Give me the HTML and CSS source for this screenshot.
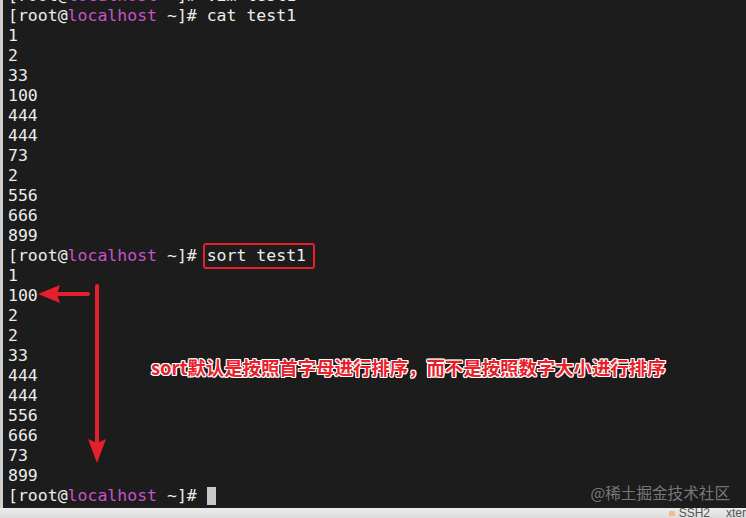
FILE: index.html
```html
<!DOCTYPE html>
<html lang="zh-CN">
<head>
    <meta charset="UTF-8">
    <title>sort test1</title>
    <link rel="stylesheet" href="styles.css">
</head>
<body>
    <div class="terminal">
        <div class="screen">
<pre class="output"><span class="line">[root@<span class="host">localhost</span> ~]# vim test1</span>
<span class="line">[root@<span class="host">localhost</span> ~]# cat test1</span>
1
2
33
100
444
444
73
2
556
666
899
<span class="line">[root@<span class="host">localhost</span> ~]# <span class="boxed">sort test1</span></span>
1
100
2
2
33
444
444
556
666
73
899
<span class="line">[root@<span class="host">localhost</span> ~]# <span class="cursor"></span></span></pre>
        </div>

        <!-- annotations drawn over the screenshot -->
        <svg class="arrows" width="746" height="508" viewBox="0 0 746 508">
            <path d="M88 294 L57 294" stroke="#e3202c" stroke-width="4" stroke-linecap="round"/>
            <path d="M38 294 L60 285 L57 294 L60 303 Z" fill="#e3202c"/>
            <path d="M97 286 L97 442" stroke="#e3202c" stroke-width="4" stroke-linecap="round"/>
            <path d="M97 463 L88 439 L97 443 L106 439 Z" fill="#e3202c"/>
        </svg>
        <div class="note">sort默认是按照首字母进行排序，而不是按照数字大小进行排序</div>
        <div class="watermark">@稀土掘金技术社区</div>
    </div>
    <div class="statusbar">
        <span class="dot"></span>
        <span>SSH2</span>
        <span>xterm</span>
    </div>
</body>
</html>
```

FILE: styles.css
```css
html, body {
    margin: 0;
    padding: 0;
}
body {
    width: 746px;
    height: 518px;
    overflow: hidden;
    background: #1c1c1c;
}
.terminal {
    position: relative;
    height: 508px;
    background: #1c1c1c;
    border-left: 3px solid #cfcfcf;
    box-sizing: border-box;
    overflow: hidden;
}
.screen {
    height: 508px;
    display: flex;
    flex-direction: column;
    justify-content: flex-end;
    padding: 0 0 2px 5px;
    box-sizing: border-box;
}
.output {
    margin: 0;
    font-family: "DejaVu Sans Mono", "Liberation Mono", monospace;
    font-size: 16.5px;
    line-height: 20px;
    color: #ececec;
    white-space: pre;
}
.host {
    color: #cc4fcc;
}
.boxed {
    position: relative;
}
.boxed::after {
    content: "";
    position: absolute;
    top: -3px;
    bottom: -4px;
    left: -4px;
    right: -9px;
    border: 2px solid #e3202c;
    border-radius: 3px;
}
.cursor {
    display: inline-block;
    width: 9px;
    height: 18px;
    background: #c8c8cc;
    vertical-align: -4px;
}
.arrows {
    position: absolute;
    left: -3px;
    top: 0;
}
.note {
    position: absolute;
    left: 148px;
    top: 356px;
    font-family: "Noto Sans CJK SC", "Noto Sans", sans-serif;
    font-size: 18.4px;
    font-weight: bold;
    line-height: 22px;
    color: #e8202a;
    text-shadow: 1px 0 0 #fff, -1px 0 0 #fff, 0 1px 0 #fff, 0 -1px 0 #fff,
        1px 1px 0 #fff, -1px -1px 0 #fff, 1px -1px 0 #fff, -1px 1px 0 #fff;
}
.watermark {
    position: absolute;
    right: 16px;
    bottom: 5px;
    font-family: "Noto Sans CJK SC", "Noto Sans", sans-serif;
    font-size: 15.6px;
    color: rgba(200, 200, 200, 0.55);
}
.statusbar {
    height: 10px;
    background: linear-gradient(#ededed, #dcdcdc);
    display: flex;
    align-items: center;
    justify-content: flex-end;
    gap: 16px;
    font-family: "Liberation Sans", Arial, sans-serif;
    font-size: 12px;
    line-height: 10px;
    color: #555;
    overflow: hidden;
    margin-right: -10px;
}
.dot {
    width: 6px;
    height: 5px;
    background: #f0c080;
    margin-right: -12px;
}
```
